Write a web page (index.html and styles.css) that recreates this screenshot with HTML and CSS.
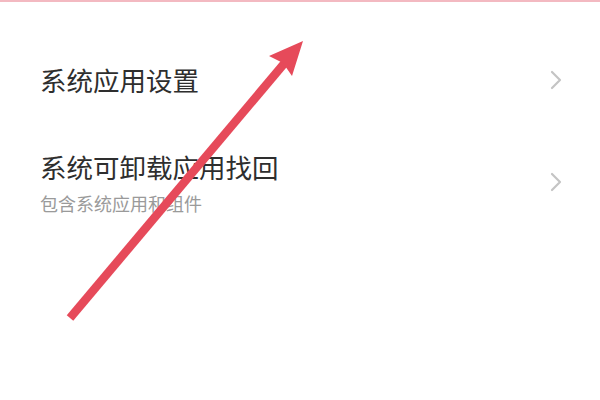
FILE: index.html
```html
<!DOCTYPE html>
<html lang="zh-CN">
<head>
<meta charset="utf-8">
<link rel="stylesheet" href="styles.css">
</head>
<body>
<div class="topline"></div>
<div class="list">
  <div class="row row-single">
    <div class="texts">
      <div class="title">系统应用设置</div>
    </div>
    <svg class="chev" viewBox="0 0 12 20" width="12" height="20"><polyline points="2,2 10,10 2,18" fill="none" stroke="#c4c4c4" stroke-width="2.2" stroke-linecap="round" stroke-linejoin="round"/></svg>
  </div>
  <div class="row row-double">
    <div class="texts">
      <div class="title">系统可卸载应用找回</div>
      <div class="sub">包含系统应用和组件</div>
    </div>
    <svg class="chev" viewBox="0 0 12 20" width="12" height="20"><polyline points="2,2 10,10 2,18" fill="none" stroke="#c4c4c4" stroke-width="2.2" stroke-linecap="round" stroke-linejoin="round"/></svg>
  </div>
</div>
<svg class="arrow" viewBox="0 0 600 400" width="600" height="400">
  <line x1="70" y1="318" x2="288" y2="59" stroke="#e64a5a" stroke-width="8.5"/>
  <polygon points="303,41 269,56 283,63 292,76" fill="#e64a5a"/>
</svg>
</body>
</html>
```
FILE: styles.css
```css
html, body {
  margin: 0;
  padding: 0;
  background: #ffffff;
}
body {
  width: 600px;
  height: 400px;
  overflow: hidden;
  position: relative;
  font-family: "Noto Sans CJK SC", "Noto Sans", sans-serif;
}
.topline {
  height: 2px;
  background: #f3b9c1;
}
.list {
  padding: 28px 40px 0 40px;
}
.row {
  display: flex;
  align-items: center;
  justify-content: space-between;
}
.row-single {
  height: 100px;
}
.row-double {
  height: 104px;
}
.texts {
  display: flex;
  flex-direction: column;
  gap: 8px;
}
.title {
  font-size: 26.5px;
  line-height: 34px;
  color: #2e2e2e;
}
.sub {
  font-size: 18px;
  line-height: 22px;
  color: #9a9a9a;
}
.chev {
  display: block;
  margin-right: -2px;
}
.arrow {
  position: absolute;
  left: 0;
  top: 0;
}
```
